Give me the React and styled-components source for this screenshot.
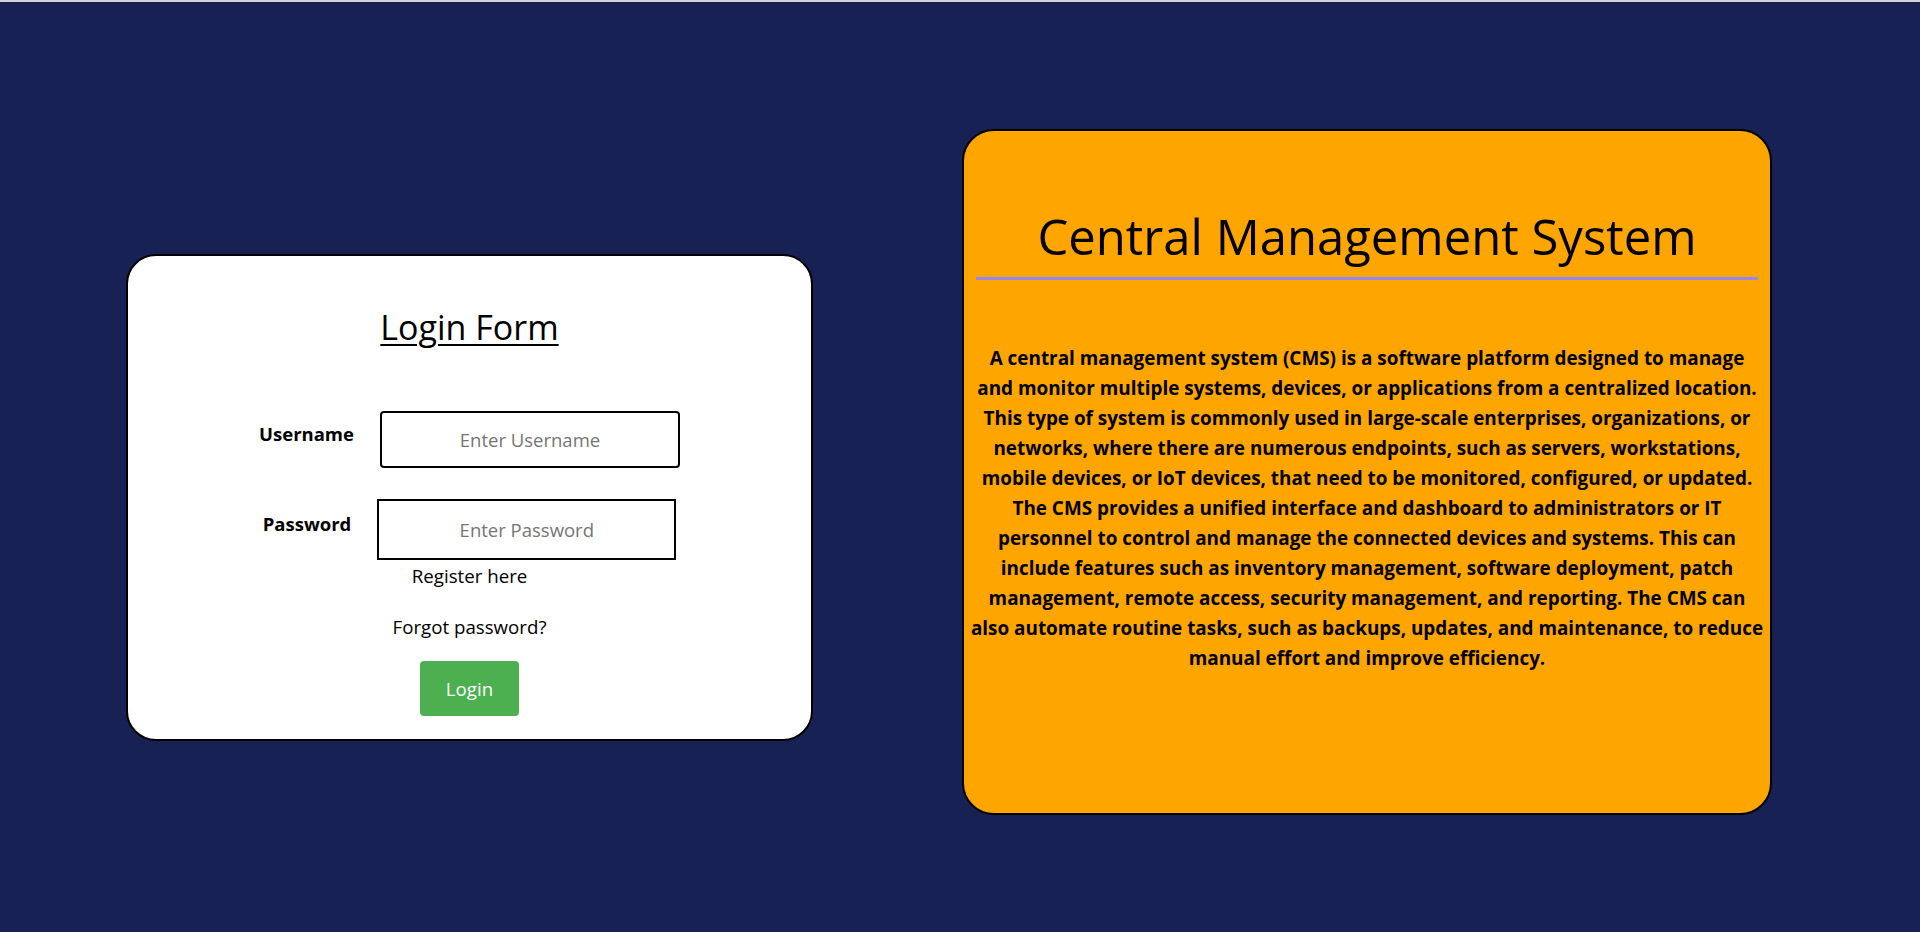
import React from "react";
import styled, { createGlobalStyle } from "styled-components";

const GlobalStyle = createGlobalStyle`
  html, body {
    margin: 0;
    padding: 0;
    background: #182153;
  }
  * { box-sizing: border-box; }
`;

const Page = styled.div`
  min-height: 932px;
  border-top: 2px solid #d4d4d4;
  background: #182153;
  display: flex;
  align-items: flex-start;
  padding-left: 126px;
  gap: 149px;
  font-family: "Open Sans", "Noto Sans", sans-serif;
  color: #000;
`;

const LoginCard = styled.form`
  width: 687px;
  margin-top: 252px;
  background: #ffffff;
  border: 2px solid #000;
  border-radius: 30px;
  padding: 48px 0 23px;
  display: flex;
  flex-direction: column;
  align-items: center;
`;

const FormTitle = styled.h1`
  margin: 0;
  font-size: 34px;
  font-weight: 400;
  line-height: normal;
  text-decoration: underline;
  text-decoration-thickness: 2px;
  text-underline-offset: 4px;
`;

const FieldRow = styled.div`
  display: flex;
  align-items: center;
  gap: 26px;
  margin-top: ${(p) => p.$top}px;
`;

const Label = styled.label`
  font-size: 18.5px;
  font-weight: 700;
  line-height: normal;
  margin-bottom: 12px;
`;

const Input = styled.input`
  width: ${(p) => p.$w}px;
  height: ${(p) => p.$h}px;
  border: 2px solid #000;
  border-radius: ${(p) => p.$r}px;
  background: #fff;
  font-family: "Open Sans", "Noto Sans", sans-serif;
  font-size: 18.5px;
  text-align: center;
  outline: none;
  padding: 0 8px;
  &::placeholder {
    color: #757575;
  }
`;

const TextLink = styled.a`
  display: block;
  margin-top: ${(p) => p.$top}px;
  font-size: 18.7px;
  line-height: 25.5px;
  color: #000;
  text-decoration: none;
  cursor: pointer;
`;

const LoginButton = styled.button`
  margin-top: 22px;
  width: 99px;
  height: 55px;
  border: none;
  border-radius: 4px;
  background: #4caf50;
  color: #fff;
  font-family: "Open Sans", "Noto Sans", sans-serif;
  font-size: 18.7px;
  cursor: pointer;
`;

const InfoCard = styled.section`
  width: 810px;
  height: 686px;
  margin-top: 127px;
  background: #ffa500;
  border: 2px solid #000;
  border-radius: 32px;
  padding: 0 12px;
  display: flex;
  flex-direction: column;
  align-items: stretch;
`;

const InfoTitle = styled.h1`
  margin: 72px 0 0;
  font-size: 49px;
  font-weight: 400;
  line-height: normal;
  text-align: center;
`;

const Divider = styled.hr`
  margin: 8px 0 0;
  height: 3px;
  border: none;
  background: #9486f6;
`;

const Description = styled.p`
  margin: 63px -8px 0;
  font-size: 18.9px;
  font-weight: 700;
  line-height: 30px;
  text-align: center;
  white-space: nowrap;
`;

const lines = [
  "A central management system (CMS) is a software platform designed to manage",
  "and monitor multiple systems, devices, or applications from a centralized location.",
  "This type of system is commonly used in large-scale enterprises, organizations, or",
  "networks, where there are numerous endpoints, such as servers, workstations,",
  "mobile devices, or IoT devices, that need to be monitored, configured, or updated.",
  "The CMS provides a unified interface and dashboard to administrators or IT",
  "personnel to control and manage the connected devices and systems. This can",
  "include features such as inventory management, software deployment, patch",
  "management, remote access, security management, and reporting. The CMS can",
  "also automate routine tasks, such as backups, updates, and maintenance, to reduce",
  "manual effort and improve efficiency.",
];

export default function App() {
  return (
    <>
      <GlobalStyle />
      <Page>
        <LoginCard onSubmit={(e) => e.preventDefault()}>
          <FormTitle>Login Form</FormTitle>
          <FieldRow $top={61}>
            <Label htmlFor="username">Username</Label>
            <Input id="username" type="text" placeholder="Enter Username" $w={300} $h={57} $r={4} />
          </FieldRow>
          <FieldRow $top={31}>
            <Label htmlFor="password">Password</Label>
            <Input id="password" type="password" placeholder="Enter Password" $w={299} $h={61} $r={0} />
          </FieldRow>
          <TextLink $top={3}>Register here</TextLink>
          <TextLink $top={25}>Forgot password?</TextLink>
          <LoginButton type="submit">Login</LoginButton>
        </LoginCard>
        <InfoCard>
          <InfoTitle>Central Management System</InfoTitle>
          <Divider />
          <Description>
            {lines.map((l, i) => (
              <React.Fragment key={i}>
                {l}
                {i < lines.length - 1 && <br />}
              </React.Fragment>
            ))}
          </Description>
        </InfoCard>
      </Page>
    </>
  );
}
